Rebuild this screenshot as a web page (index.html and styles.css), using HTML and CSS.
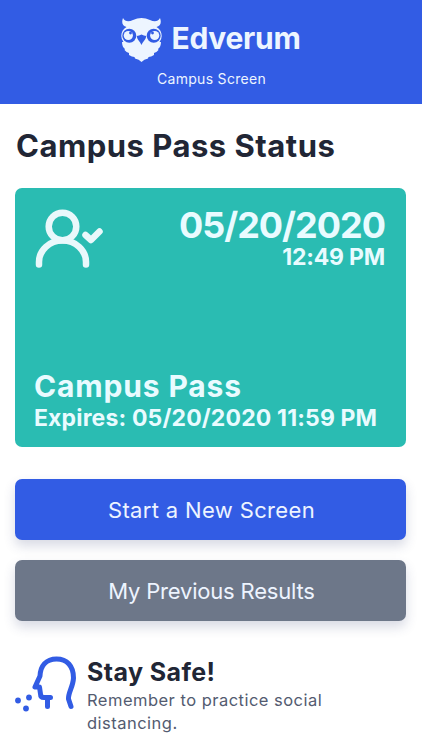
FILE: index.html
```html
<!DOCTYPE html>
<html lang="en-US">
  <head>
    <meta charset="utf-8">
    <meta name="viewport" content="width=device-width, initial-scale=1">
    <title>Edverum Campus Screen</title>
    <link rel="stylesheet" href="styles.css">
  </head>
  <body>
    <header class="top">
      <div class="brand">
        <svg class="owl" width="43" height="46" viewBox="0 0 43 46" aria-hidden="true">
          <path fill="#edf5ff" d="M3 1 C5 5 9 5 13 3 Q21.500 -1 30 3 C34 5 38 5 40 1 C42 6 40 9 36.500 10 C40 12 41.700 15 41.700 19 Q41.700 22 39.500 25 L41 25 Q41 30 38 32 L38.500 33 Q36 36 34 36 L34 38 Q31 40 28.500 40 L28 41.500 Q24 42 21.500 45 Q19 42 15 41.500 L14.500 40 Q12 40 9 38 L9 36 Q7 36 4.500 33 L5 32 Q2 30 2 25 L3.500 25 Q1.300 22 1.300 19 C1.300 15 3 12 6.500 10 C3 9 1 6 3 1 Z"/>
          <g fill="#325ce4">
            <circle cx="9.300" cy="18.800" r="7"/>
            <circle cx="33.700" cy="18.800" r="7"/>
            <path d="M16.800 19 Q19 18.500 21.500 17.500 Q24 18.500 26.200 19 C26 23 23 24 21.500 28 C20 24 17 23 16.800 19 Z"/>
          </g>
          <g fill="#edf5ff">
            <circle cx="8.300" cy="18.500" r="4.600"/>
            <circle cx="34.700" cy="18.500" r="4.600"/>
          </g>
          <g fill="#325ce4">
            <circle cx="10.500" cy="16" r="1.400"/>
            <circle cx="32.500" cy="16" r="1.400"/>
          </g>
        </svg>
        <span class="brand-name">Edverum</span>
      </div>
      <div class="tagline">Campus Screen</div>
    </header>
    <main>
      <h1>Campus Pass Status</h1>
      <section class="pass">
        <div class="pass-top">
          <svg class="user" width="70" height="60" viewBox="0 0 70 60" aria-hidden="true">
            <circle cx="28.500" cy="18.500" r="13.800"/>
            <path d="M5 56.500 V54 A23.500 21.500 0 0 1 52 54 V56.500 M51.500 27 L57 32 L65.500 23.500"/>
          </svg>
          <div class="now">
            <div class="date">05/20/2020</div>
            <div class="time">12:49 PM</div>
          </div>
        </div>
        <div class="pass-bottom">
          <div class="pass-name">Campus Pass</div>
          <div class="expires">Expires: 05/20/2020 11:59 PM</div>
        </div>
      </section>
      <button class="btn start">Start a New Screen</button>
      <button class="btn results">My Previous Results</button>
      <section class="tip">
        <svg class="cough" width="64" height="58" viewBox="0 0 64 58" aria-hidden="true">
          <path d="M56 50.500 L53.500 43 C53 37 58 31 58.500 22 C58.500 10 52 3 41.500 3 C31 3 25.500 10 25 20 L20 31 H24.500 L25.500 38 Q25.500 41.500 29 41.500 H35.500 M32.500 42 V50.500"/>
          <circle cx="3" cy="44.500" r="2.900"/>
          <circle cx="14" cy="41.500" r="2.900"/>
          <circle cx="11" cy="52.500" r="2.900"/>
        </svg>
        <div class="tip-text">
          <h2>Stay Safe!</h2>
          <p>Remember to practice social distancing.</p>
        </div>
      </section>
    </main>
  </body>
</html>
```
FILE: styles.css
```css
* { box-sizing: border-box; }
body {
  margin: 0;
  background: #fff;
  color: #212635;
  font-family: Inter, "Liberation Sans", sans-serif;
}
.top {
  height: 104px;
  padding-top: 17px;
  background: #325ce4;
  color: #edf5ff;
  text-align: center;
}
.brand {
  display: flex;
  justify-content: center;
  gap: 9px;
  height: 46px;
  margin-right: 2px;
}
.brand-name {
  font-size: 30px;
  font-weight: 700;
  letter-spacing: -0.3px;
  line-height: 43px;
}
.tagline {
  margin-top: 6px;
  padding-left: 1px;
  font-size: 14px;
  letter-spacing: 0.3px;
  line-height: 20px;
}
main {
  padding: 24px 16px 0 15px;
}
h1 {
  margin: 0 0 24px 1px;
  font-size: 31px;
  letter-spacing: 0.5px;
  line-height: 36px;
  white-space: nowrap;
}
.pass {
  display: flex;
  flex-direction: column;
  justify-content: space-between;
  height: 259px;
  padding: 20px 21px 14px 19px;
  border-radius: 7px;
  background: #2abcb2;
  color: #e9fbff;
  font-weight: 700;
  white-space: nowrap;
}
.pass-top {
  display: flex;
  justify-content: space-between;
}
.user {
  fill: none;
  stroke: #e9f8fb;
  stroke-width: 6.5;
  stroke-linecap: round;
  stroke-linejoin: round;
}
.now {
  text-align: right;
}
.date {
  font-size: 36px;
  letter-spacing: -1px;
  line-height: 35px;
}
.time {
  font-size: 23px;
  letter-spacing: -0.2px;
  line-height: 28px;
}
.pass-name {
  font-size: 30px;
  letter-spacing: 0.85px;
  line-height: 34px;
}
.expires {
  font-size: 23px;
  letter-spacing: 0.15px;
  line-height: 30px;
}
.btn {
  display: block;
  width: 100%;
  height: 61px;
  padding: 0 0 0 2px;
  border: none;
  border-radius: 7px;
  box-shadow: 0 6px 12px rgba(50, 60, 110, 0.19);
  color: #edf4ff;
  font-family: inherit;
  font-size: 22px;
}
.start {
  margin-top: 32px;
  background: #325ce4;
  letter-spacing: 0.35px;
}
.results {
  margin-top: 20px;
  background: #6d7789;
  letter-spacing: -0.2px;
}
.tip {
  display: flex;
  gap: 8px;
  margin-top: 35px;
}
.cough {
  flex: none;
  fill: #325ce4;
}
.cough path {
  fill: none;
  stroke: #325ce4;
  stroke-width: 5;
  stroke-linecap: round;
  stroke-linejoin: round;
}
h2 {
  margin: 0;
  font-size: 25px;
  letter-spacing: 0.4px;
  line-height: 33px;
}
p {
  margin: 0;
  color: #535b70;
  font-size: 16.5px;
  letter-spacing: 0.48px;
  line-height: 23px;
}
```
